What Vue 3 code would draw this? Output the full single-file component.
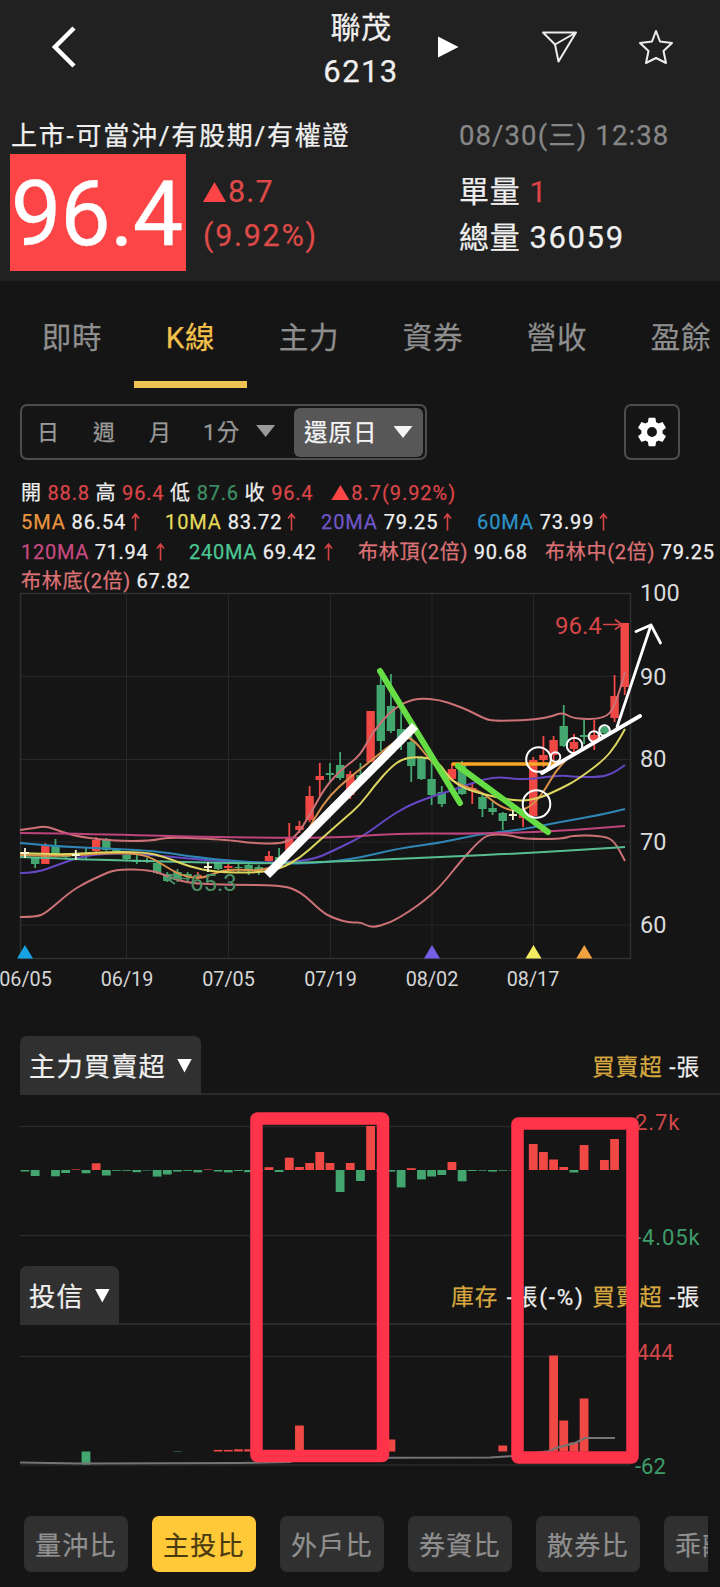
<script setup>
const stepX = 10.165
const xAt = (i) => 25 + stepX * i

const tabs = ['即時', 'K線', '主力', '資券', '營收', '盈餘']
const chips = ['量沖比', '主投比', '外戶比', '券資比', '散券比', '乖離率']

const movingRows = [
  [
    { name: '5MA', value: '86.54', tone: 'c-ma5', up: true },
    { name: '10MA', value: '83.72', tone: 'c-ma10', up: true },
    { name: '20MA', value: '79.25', tone: 'c-ma20', up: true },
    { name: '60MA', value: '73.99', tone: 'c-ma60', up: true },
  ],
  [
    { name: '120MA', value: '71.94', tone: 'c-ma120', up: true },
    { name: '240MA', value: '69.42', tone: 'c-ma240', up: true },
    { name: '布林頂(2倍)', value: '90.68', tone: 'c-boll' },
    { name: '布林中(2倍)', value: '79.25', tone: 'c-boll' },
  ],
  [{ name: '布林底(2倍)', value: '67.82', tone: 'c-boll' }],
]

// index, direction, high, body top, body bottom, low
const candles = [
  [1, 'g', 857, 857, 864, 868], [2, 'r', 843, 846, 864, 864], [3, 'g', 839, 845, 854, 854],
  [4, 'g', 853, 855, 857, 858], [6, 'g', 848, 853, 855, 860], [7, 'r', 837, 840, 851, 852],
  [8, 'g', 838, 839, 850, 851], [9, 'g', 848, 849, 853, 853], [10, 'g', 854, 855, 859, 860],
  [11, 'g', 855, 860, 862, 864], [12, 'g', 858, 860, 861, 863], [13, 'g', 862, 863, 873, 874],
  [14, 'g', 872, 874, 881, 882], [15, 'g', 869, 872, 880, 882], [16, 'g', 872, 874, 876, 882],
  [17, 'r', 872, 875, 878, 880], [19, 'g', 862, 863, 869, 870], [20, 'r', 864, 866, 868, 871],
  [21, 'g', 864, 867, 868, 872], [22, 'g', 864, 865, 871, 875], [23, 'g', 865, 867, 872, 875],
  [24, 'r', 851, 856, 861, 863], [25, 'g', 848, 857, 862, 865], [26, 'r', 823, 837, 850, 850],
  [27, 'r', 821, 826, 830, 833], [28, 'r', 786, 796, 820, 822], [29, 'r', 763, 776, 780, 797],
  [30, 'g', 763, 773, 775, 781], [31, 'g', 752, 765, 778, 780], [32, 'r', 771, 774, 795, 799],
  [33, 'g', 763, 775, 778, 781], [34, 'r', 711, 711, 762, 762], [35, 'g', 676, 685, 741, 751],
  [36, 'g', 674, 706, 731, 733], [37, 'g', 711, 729, 742, 750], [38, 'g', 735, 742, 766, 782],
  [39, 'g', 756, 758, 779, 780], [40, 'g', 760, 779, 795, 805], [41, 'g', 786, 792, 804, 807],
  [42, 'r', 764, 769, 779, 781], [43, 'g', 761, 765, 794, 795], [44, 'r', 783, 788, 791, 804],
  [45, 'g', 794, 797, 809, 817], [46, 'g', 802, 808, 812, 815], [47, 'g', 812, 813, 821, 830],
  [49, 'r', 809, 815, 818, 827], [50, 'r', 757, 760, 816, 816], [51, 'r', 736, 755, 760, 767],
  [52, 'r', 736, 740, 755, 765], [53, 'g', 705, 726, 746, 747], [54, 'r', 734, 742, 749, 755],
  [55, 'g', 720, 735, 737, 744], [56, 'r', 720, 735, 741, 750], [57, 'g', 724, 727, 733, 735],
  [58, 'r', 675, 696, 718, 722], [59, 'r', 623, 623, 687, 695],
]
const dojis = [[0, 853], [5, 855], [18, 867], [48, 815]]

const lines = [
  { tone: 's-boll', pts: [[20, 830], [35, 828], [46, 826], [62, 832], [80, 837], [115, 841], [150, 841], [170, 837], [230, 840], [250, 843], [280, 844], [295, 838], [310, 815], [325, 787], [343, 768], [360, 756], [372, 733], [390, 712], [405, 702], [420, 698], [440, 700], [455, 705], [470, 711], [485, 719], [495, 721], [530, 720], [550, 717], [563, 712], [573, 719], [605, 719], [615, 706], [625, 672]] },
  { tone: 's-boll', pts: [[20, 917], [36, 917], [46, 913], [70, 892], [85, 883], [100, 876], [116, 869], [150, 870], [165, 875], [185, 883], [230, 885], [280, 885], [300, 891], [322, 912], [333, 918], [350, 923], [361, 922], [371, 928], [390, 923], [410, 911], [425, 900], [440, 887], [460, 862], [480, 840], [490, 834], [510, 835], [523, 839], [563, 839], [573, 835], [605, 836], [615, 842], [625, 861]] },
  { tone: 's-ma20', pts: [[20, 873], [36, 873], [60, 864], [80, 857], [100, 854], [135, 853], [200, 860], [260, 863], [310, 861], [335, 850], [365, 835], [385, 820], [405, 807], [430, 797], [450, 791], [470, 784], [485, 779], [500, 777], [525, 780], [560, 775], [575, 777], [600, 777], [612, 774], [625, 765]] },
  { tone: 's-ma60', pts: [[20, 843], [60, 847], [150, 850], [200, 858], [260, 863], [300, 864], [350, 860], [400, 848], [440, 843], [480, 834], [520, 830], [560, 822], [600, 815], [625, 809]] },
  { tone: 's-ma120', pts: [[20, 833], [100, 834], [200, 837], [300, 838], [350, 837], [400, 833], [480, 834], [560, 831], [625, 826]] },
  { tone: 's-ma240', pts: [[20, 857], [100, 860], [150, 861], [260, 864], [350, 861], [440, 857], [530, 853], [625, 847]] },
  { tone: 's-ma5', pts: [[20, 855], [50, 856], [80, 855], [110, 853], [145, 854], [165, 866], [180, 875], [200, 879], [215, 873], [230, 869], [265, 871], [285, 860], [300, 845], [315, 817], [330, 795], [350, 777], [372, 760], [390, 745], [405, 736], [415, 741], [430, 760], [447, 778], [465, 787], [482, 792], [500, 807], [518, 812], [533, 805], [545, 790], [555, 772], [566, 760]] },
  { tone: 's-ma10', pts: [[20, 853], [60, 855], [100, 852], [145, 852], [165, 857], [190, 867], [215, 872], [255, 873], [280, 869], [300, 858], [320, 840], [345, 818], [360, 805], [375, 785], [390, 768], [402, 759], [415, 757], [430, 758], [440, 764], [450, 779], [465, 789], [487, 795], [505, 799], [523, 801], [540, 798], [560, 789], [577, 780], [604, 760], [616, 745], [625, 729]] },
]
const smooth = (p) => {
  let d = `M${p[0]}`
  for (let i = 1; i < p.length - 1; i++) {
    d += ` Q${p[i]} ${(p[i][0] + p[i + 1][0]) / 2},${(p[i][1] + p[i + 1][1]) / 2}`
  }
  return `${d} L${p[p.length - 1]}`
}

const dates = [['06/05', 25.5], ['06/19', 127], ['07/05', 228.5], ['07/19', 330.5], ['08/02', 432], ['08/17', 533]]
const prices = [[100, 592], [90, 676], [80, 758.5], [70, 841.5], [60, 924.5]]
const markers = [[25, 'm-blue'], [432, 'm-purple'], [533.5, 'm-yellow'], [584.3, 'm-orange']]

// index, top or bottom edge measured from the zero line (positive = buy)
const mainForce = [
  [0, -1.5], [1, -6], [3, -6.3], [4, -3], [5, 0.6], [6, -3.3], [7, 6.7], [8, -5.5], [9, -0.8], [10, -0.8],
  [11, -2.2], [12, -0.5], [13, -6.6], [14, -4.5], [15, -1.6], [16, -0.9], [17, -2.4], [18, 0.6], [19, -1.5],
  [20, -2.4], [21, -1], [22, -2.2], [23, -1], [24, 2.8], [25, -2], [26, 12.3], [27, 3], [28, 7], [29, 18],
  [30, 7], [31, -22], [32, 7], [33, -11], [34, 44], [35, -1], [36, -1.6], [37, -17.4], [38, 1.8], [39, -9.4],
  [40, -6.5], [41, -5], [42, 8], [43, -11.3], [44, -1], [45, -0.7], [46, -1.6], [47, -0.7], [48, -0.5],
  [50, 26], [51, 18], [52, 10.5], [53, 3], [54, -2.5], [55, 25], [57, 10], [58, 31],
]
const trust = [
  [6, -13], [15, -0.4], [19, 1.6], [20, 1.6], [21, 2.2], [22, 2.2], [27, 26], [36, 12], [47, 6],
  [52, 96], [53, 31], [54, 9], [55, 53],
]
const barBox = (v, zero) => ({ y: v > 0 ? zero - v : zero, h: Math.abs(v) })
</script>

<template>
  <div class="app">
    <header class="top">
      <div class="nav">
        <svg class="back" width="26" height="42" viewBox="0 0 26 42"><path d="M23 2 4 21 23 40" /></svg>
        <div class="title"><span>聯茂</span><span class="code">6213</span></div>
        <svg class="play" width="22" height="22" viewBox="0 0 22 22"><path d="M1 0.500 21.500 11 1 21.500Z" /></svg>
        <svg class="send" width="38" height="34" viewBox="0 0 38 34"><path d="M2 2.500H35L17.500 31.500 14 14.500ZM35 2.500 14 14.500" /></svg>
        <svg class="star" width="36" height="36" viewBox="0 0 36 36"><path d="M18 2 22 12.500 34 14 25.500 22 28 34 18 29 8 34 10.500 22 2 14 14 12.500Z" /></svg>
      </div>
      <div class="quote">
        <div class="left">
          <div class="market">上市-可當沖/有股期/有權證</div>
          <div class="priceline">
            <div class="price">96.4</div>
            <div class="change">
              <div><i class="tri-up"></i>8.7</div>
              <div class="pct">(9.92%)</div>
            </div>
          </div>
        </div>
        <div class="right">
          <div class="date">08/30(三) 12:38</div>
          <div class="vol one">單量 <b>1</b></div>
          <div class="vol">總量 <span class="total">36059</span></div>
        </div>
      </div>
    </header>

    <nav class="tabs">
      <div v-for="(t, i) in tabs" :key="t" class="tab" :class="{ on: i === 1 }">{{ t }}</div>
    </nav>

    <div class="tools">
      <div class="segment">
        <span class="s1">日</span><span class="s2">週</span><span class="s3">月</span>
        <span class="s4">1分<i class="tri-down"></i></span>
        <span class="s5">還原日<i class="tri-down"></i></span>
      </div>
      <div class="gear">
        <svg width="34" height="34" viewBox="0 0 24 24"><path d="M19.430 12.980c.04-.32.07-.64.07-.98s-.03-.66-.07-.98l2.110-1.650c.19-.15.24-.42.12-.64l-2-3.460c-.12-.22-.39-.3-.61-.22l-2.490 1c-.52-.4-1.080-.73-1.690-.98l-.38-2.650C14.460 2.180 14.250 2 14 2h-4c-.25 0-.46.18-.49.42l-.38 2.650c-.61.25-1.170.59-1.690.98l-2.490-1c-.23-.09-.49 0-.61.22l-2 3.460c-.13.22-.07.49.12.64l2.110 1.650c-.04.32-.07.65-.07.98s.03.66.07.98l-2.110 1.650c-.19.15-.24.42-.12.64l2 3.460c.12.22.39.3.61.22l2.490-1c.52.4 1.080.73 1.690.98l.38 2.650c.03.24.24.42.49.42h4c.25 0 .46-.18.49-.42l.38-2.650c.61-.25 1.170-.59 1.690-.98l2.490 1c.23.09.49 0 .61-.22l2-3.460c.12-.22.07-.49-.12-.64zM12 15.500a3.500 3.500 0 1 1 0-7 3.500 3.500 0 0 1 0 7z" /></svg>
      </div>
    </div>

    <section class="legend">
      <div class="row ohlc">開 <b>88.8</b> 高 <b>96.4</b> 低 <em>87.6</em> 收 <b>96.4</b><b class="chg"><i class="tri-up sm"></i>8.7(9.92%)</b></div>
      <div v-for="(row, r) in movingRows" :key="r" class="row grid" :class="'g' + r">
        <span v-for="m in row" :key="m.name"><span :class="m.tone">{{ m.name }}</span> {{ m.value }}<svg v-if="m.up" class="up" width="9" height="18" viewBox="0 0 9 18"><path d="M4.500 17.500V1M1 5.500 4.500 1 8 5.500" /></svg></span>
      </div>
    </section>

    <svg class="kchart" width="720" height="420" viewBox="0 590 720 420">
      <g class="gridline">
        <path v-for="y in [676.5, 759.5, 842, 925]" :key="y" :d="`M20.500 ${y}H630`" />
        <path v-for="x in [126.5, 228.5, 330.5, 432, 533.5]" :key="x" :d="`M${x} 593.500V958`" />
      </g>
      <rect class="frame" x="20.5" y="593.5" width="610" height="365" />
      <g v-for="c in candles" :key="c[0]" :class="c[1]">
        <rect :x="xAt(c[0]) - 0.9" :y="c[2]" width="1.8" :height="c[5] - c[2]" />
        <rect :x="xAt(c[0]) - 4.2" :y="c[3]" width="8.4" :height="c[4] - c[3]" />
      </g>
      <path v-for="(l, i) in lines" :key="i" class="curve" :class="l.tone" :d="smooth(l.pts)" />
      <path v-for="d in dojis" :key="d[0]" class="doji" :d="`M${xAt(d[0]) - 4} ${d[1]}h8M${xAt(d[0])} ${d[1] - 5}v10`" />
      <text class="hi" x="555" y="633.5">96.4</text>
      <path class="hi-arrow" d="M603 624.500H621M615 619.500 622 624.500 615 629.500" />
      <text class="lo" x="190" y="890.5">65.3</text>
      <path class="lo-arrow" d="M167 878.500H190M175 873.500 167 878.500 175 884" />
      <path v-for="m in markers" :key="m[0]" :class="m[1]" :d="`M${m[0]} 945l8 13.500h-16z`" />
      <g class="notes">
        <path class="n-orange" d="M453 764H557" />
        <path class="n-green" d="M380 671 460 803" />
        <path class="n-green" d="M458 766 548 832" />
        <path class="n-white thick" d="M270 872 412 729" />
        <path class="n-white" d="M542 773 640 716" />
        <path class="n-white thin" d="M617 727 651 625M636 631.500 651 625 660.500 643" />
        <circle cx="538.500" cy="759.500" r="12.300" /><circle cx="536.500" cy="804" r="13.800" />
        <circle cx="555.500" cy="757" r="4.800" /><circle cx="574.500" cy="745.500" r="7.800" />
        <circle cx="594" cy="736.500" r="5.300" /><circle cx="604.500" cy="730.500" r="5.300" />
      </g>
      <text v-for="p in prices" :key="p[0]" class="axis" x="640" :y="p[1] + 8.7">{{ p[0] }}</text>
      <text v-for="d in dates" :key="d[0]" class="day" :x="d[1]" y="985.5">{{ d[0] }}</text>
    </svg>

    <div class="panels">
      <section class="panel">
        <div class="head">
          <div class="pick">主力買賣超<i class="tri-down"></i></div>
          <div class="info"><span class="gold">買賣超</span> -張</div>
        </div>
        <svg width="720" height="171" viewBox="0 1095 720 171">
          <path class="pgrid" d="M20 1126.500H630M20 1235.500H630" />
          <rect v-for="b in mainForce" :key="b[0]" :class="b[1] > 0 ? 'r' : 'g'" :x="xAt(b[0]) - 4.4" :y="barBox(b[1], 1170).y" width="8.8" :height="barBox(b[1], 1170).h" />
          <text class="red wide" x="635" y="1129.5">2.7k</text>
          <text class="green wide" x="635" y="1244.5">-4.05k</text>
        </svg>
      </section>
      <section class="panel">
        <div class="head">
          <div class="pick">投信<i class="tri-down"></i></div>
          <div class="info"><span class="gold">庫存</span> <span class="stockinfo">-張(-%)</span> <span class="gold">買賣超</span> -張</div>
        </div>
        <svg width="720" height="171" viewBox="0 1325 720 171">
          <path class="pgrid" d="M20 1356.500H630M20 1465H630" />
          <rect v-for="b in trust" :key="b[0]" :class="b[1] > 0 ? 'r' : 'g'" :x="xAt(b[0]) - 4.4" :y="barBox(b[1], 1451.5).y" width="8.8" :height="barBox(b[1], 1451.5).h" />
          <path class="stock" d="M20 1462.500 80 1463.500 240 1463 290 1462 300 1458 490 1457.500 512 1456 550 1451 556 1448 575 1443 585 1438H615" />
          <text class="red" x="636.500" y="1359.5">444</text>
          <text class="green" x="635" y="1474">-62</text>
        </svg>
      </section>
      <svg class="frames" width="720" height="460" viewBox="0 1036 720 460">
        <rect x="256.500" y="1118.500" width="126.500" height="337.500" rx="1" />
        <rect x="517.500" y="1123.500" width="115" height="334" rx="1" />
      </svg>
    </div>

    <div class="chips">
      <div v-for="(c, i) in chips" :key="c" class="chip" :class="{ on: i === 1 }">{{ c }}</div>
    </div>
  </div>
</template>

<style>
body { background: #151515; }
</style>
<style scoped>
.app { width: 720px; height: 1587px; overflow: hidden; background: #151515; color: #efefef; font-family: Roboto, "Noto Sans CJK TC", sans-serif; white-space: nowrap; -webkit-text-stroke: 0.25px currentColor; }
svg { display: block; flex: none; }
svg text { -webkit-text-stroke: 0; }
i { display: inline-block; }
b, em { font-weight: 400; font-style: normal; }
b { color: #d94547; }
em { color: #3f8f66; }
.top { height: 281px; background: #212121; box-sizing: border-box; }
.nav { height: 113px; display: flex; align-items: flex-start; }
.back { margin: 26px 0 0 51px; fill: none; stroke: #fff; stroke-width: 4.500; }
.title { width: 120px; margin: 6px 0 0 224px; display: flex; flex-direction: column; align-items: center; font-size: 30px; line-height: 43.500px; letter-spacing: 0.5px; }
.code { font-size: 31px; letter-spacing: 1.4px; }
.play { margin: 36px 0 0 16px; fill: #fff; }
.send { margin: 30px 0 0 82px; fill: none; stroke: #eee; stroke-width: 2; stroke-linejoin: round; }
.star { margin: 29px 0 0 59px; fill: none; stroke: #eee; stroke-width: 2; stroke-linejoin: round; }
.quote { display: flex; padding-left: 10px; }
.left { width: 449px; }
.market { height: 41px; line-height: 46px; padding-left: 1px; font-size: 26px; letter-spacing: 1.75px; }
.priceline { display: flex; }
.price { width: 176px; height: 117px; line-height: 122px; background: #fb4547; color: #fff; font-size: 90px; text-align: center; letter-spacing: -1px; text-indent: -3px; }
.change { padding: 16px 0 0 17px; color: #dd4a48; font-size: 30.500px; line-height: 44px; letter-spacing: 1.2px; }
.pct { letter-spacing: 1.7px; }
.tri-up { width: 23px; height: 20px; margin-right: 2px; background: #fb4547; clip-path: polygon(50% 0, 100% 100%, 0 100%); }
.tri-up.sm { width: 18px; height: 15px; margin-right: 2px; }
.date { color: #878787; font-size: 27.500px; line-height: 46px; letter-spacing: 1.1px; }
.vol { font-size: 30px; line-height: 46px; letter-spacing: 0.7px; }
.vol b { margin-left: 1px; }
.total { font-size: 31px; letter-spacing: 1.6px; margin-left: 1px; }
.vol.one { margin-top: 10px; }
.tabs { height: 107px; display: flex; padding-left: 10px; }
.tab { width: 124px; flex: none; box-sizing: border-box; text-align: center; font-size: 29.500px; line-height: 114px; color: #8e8e8e; letter-spacing: 0.8px; }
.tab.on { width: 113px; color: #f2c24b; border-bottom: 7px solid #efc452; }
.tools { height: 56px; margin: 16px 40px 0 20px; display: flex; justify-content: space-between; }
.segment { width: 407px; height: 56px; box-sizing: border-box; border: 2px solid #4d4d4d; border-radius: 7px; display: flex; align-items: center; color: #9a9a9a; font-size: 22px; line-height: 51px; letter-spacing: 1px; }
.s1 { margin-left: 15px; width: 56px; }
.s2 { width: 56px; }
.s3 { width: 54px; }
.s4 { width: 91px; font-size: 22.5px; }
.s5 { width: 129px; height: 49px; box-sizing: border-box; padding-left: 10px; border-radius: 6px; background: #575757; color: #f4f4f4; font-size: 23.500px; }
.tri-down { width: 19px; height: 12px; background: currentColor; clip-path: polygon(0 0, 100% 0, 50% 100%); }
.s4 .tri-down { margin-left: 16px; vertical-align: 2.500px; }
.s5 .tri-down { margin-left: 16px; vertical-align: 2.500px; }
.gear { width: 56px; height: 56px; box-sizing: border-box; border: 2px solid #4d4d4d; border-radius: 7px; display: flex; align-items: center; justify-content: center; fill: #fff; }
.legend { height: 130px; box-sizing: border-box; padding: 19px 0 0 21px; font-size: 20px; line-height: 29.300px; letter-spacing: 0.85px; }
.row { height: 29.300px; }
.chg { margin-left: 18px; }
.ohlc { letter-spacing: 0.8px; }
.ohlc .chg { letter-spacing: 0.95px; }
.grid { display: grid; }
.g0 { grid-template-columns: 144px 156px 156px 150px; letter-spacing: 0.9px; }
.g1 { grid-template-columns: 168px 169px 187px 180px; letter-spacing: 0.72px; }
.g2 { letter-spacing: 0.7px; }
.up { display: inline-block; margin-left: 5px; vertical-align: -2px; fill: none; stroke: #d94547; stroke-width: 1.600; }
.g1 .up { margin-left: 7px; }
.c-ma5 { color: #e8953f; } .c-ma10 { color: #e3da5c; } .c-ma20 { color: #6f57c8; }
.c-ma60 { color: #2b93c9; } .c-ma120 { color: #c54a80; } .c-ma240 { color: #4cc794; } .c-boll { color: #dc7275; }
.kchart { overflow: visible; }
.gridline path { stroke: #272727; stroke-width: 1; }
.frame { fill: none; stroke: #303030; stroke-width: 1.500; }
.r { fill: #f04845; } .g { fill: #42a66e; }
.curve { fill: none; stroke-width: 2; stroke-linejoin: round; }
.s-boll { stroke: #cc7175; } .s-ma5 { stroke: #d8914c; } .s-ma10 { stroke: #ddd560; } .s-ma20 { stroke: #6547c4; }
.s-ma60 { stroke: #2f86b5; } .s-ma120 { stroke: #bd447c; } .s-ma240 { stroke: #58bd90; }
.doji { stroke: #f5f5d0; stroke-width: 1.800; }
.hi, .lo { font-size: 24px; }
.hi { fill: #d64547; } .hi-arrow { fill: none; stroke: #d64547; stroke-width: 1.600; }
.lo { fill: #4c9068; } .lo-arrow { fill: none; stroke: #4c9068; stroke-width: 1.600; }
.m-blue { fill: #17a3e3; } .m-purple { fill: #735fe8; } .m-yellow { fill: #f3eb62; } .m-orange { fill: #f2a243; }
.notes path, .notes circle { fill: none; stroke: #fff; stroke-width: 2; stroke-linecap: round; stroke-linejoin: round; }
.notes .n-orange { stroke: #f9a526; stroke-width: 3.500; }
.notes .n-green { stroke: #66dc45; stroke-width: 6; }
.notes .n-white { stroke-width: 3.800; }
.notes .thick { stroke-width: 8.500; stroke-linecap: square; }
.notes .thin { stroke-width: 2.800; }
.axis { font-size: 23.500px; fill: #dadada; }
.day { font-size: 19.800px; fill: #d6d6d6; text-anchor: middle; }
.panels { position: relative; margin-top: 26px; height: 460px; }
.panel { height: 230px; }
.head { height: 59px; margin-left: 20px; box-sizing: border-box; border-bottom: 2px solid #2b2b2b; display: flex; justify-content: space-between; }
.pick { height: 59px; line-height: 62px; padding: 0 9px 0 9px; background: #303030; border-radius: 7px 7px 0 0; font-size: 26.300px; letter-spacing: 1.1px; }
.pick .tri-down { width: 15px; height: 14px; margin-left: 11px; vertical-align: 3.500px; background: #fff; }
.info { margin-right: 20px; font-size: 22.500px; line-height: 63px; letter-spacing: 1px; }
.stockinfo { letter-spacing: 1.8px; margin: 0 1px 0 2px; }
.gold { color: #d8a840; }
.pgrid { stroke: #2a2a2a; stroke-width: 1.500; }
.panel text { font-size: 22px; }
.panel .wide { letter-spacing: 0.9px; }
.red { fill: #d04648; } .green { fill: #3e9c6a; }
.stock { fill: none; stroke: #747474; stroke-width: 2; }
.frames { position: absolute; left: 0; top: 0; fill: none; stroke: #ff334a; stroke-width: 12.500; stroke-linejoin: round; }
.chips { margin: 20px 12px 0 24px; display: flex; gap: 24px; overflow: hidden; }
.chip { width: 104px; height: 56px; flex: none; box-sizing: border-box; padding-left: 11px; border-radius: 7px; background: #303030; color: #909090; font-size: 26px; line-height: 61px; letter-spacing: 1.200px; overflow: hidden; }
.chip.on { background: #ffc938; color: #4a3a10; }
</style>
